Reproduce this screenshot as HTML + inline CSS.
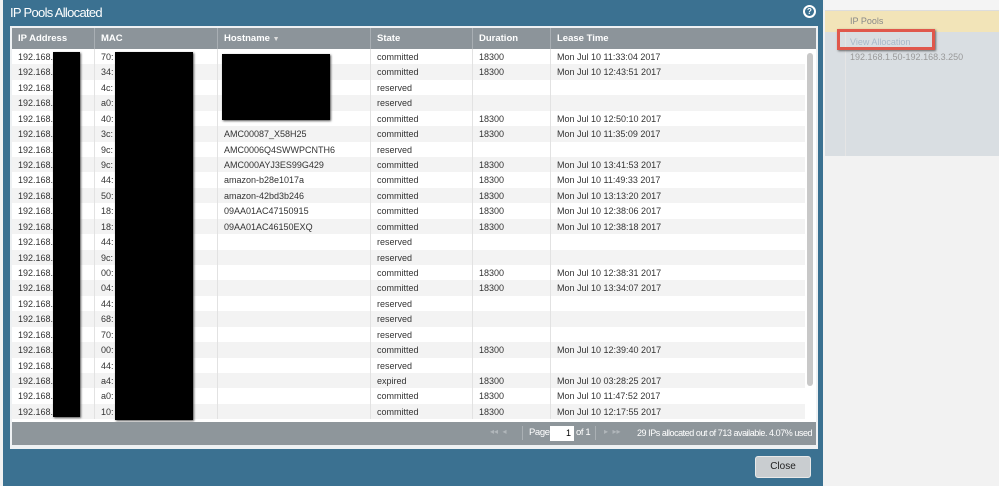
<!DOCTYPE html>
<html><head><meta charset="utf-8"><style>
body{margin:0;width:999px;height:486px;overflow:hidden;background:#f2f2f2;font-family:"Liberation Sans",sans-serif;position:relative}
.abs{position:absolute}
#modal{left:3px;top:0;width:820px;height:486px;background:#3b7191}
#title{left:10px;top:5px;color:#fff;font-size:13px;letter-spacing:-0.7px}
#help{left:803px;top:5px;width:9px;height:9px;border-radius:50%;background:#3b7191;border:2px solid #fff;color:#fff;font-size:8px;font-weight:bold;text-align:center;line-height:9px}
#panel{left:10px;top:26px;width:808px;height:423px;background:#eef1f3}
#grid{left:12px;top:28px;width:804px;height:394px;background:#fff;overflow:hidden}
#hdr{left:0;top:0;width:804px;height:21px;background:#8c949a;color:#fff;font-size:9.5px;font-weight:bold}
.h{position:absolute;top:0;height:21px;line-height:21px;padding-left:6px;box-sizing:border-box;border-left:1px solid #a9afb4}
.row{position:absolute;left:0;width:793px;height:15.43px;font-size:9px;color:#333;line-height:17px}
.row:nth-child(even){background:#f3f3f3}
.c{position:absolute;top:0;height:100%;padding-left:6px;box-sizing:border-box;border-left:1px solid #e2e2e2;white-space:nowrap;overflow:hidden}
.c1{left:0;width:82px;border-left:none}.c2{left:82px;width:123px}.c3{left:205px;width:153px}.c4{left:358px;width:102px}.c5{left:460px;width:78px}.c6{left:538px;width:255px}
#rows{left:0;top:21px;width:804px;height:373px}
#sb{left:793px;top:21px;width:11px;height:373px;background:#fff}
#sbt{left:795px;top:25px;width:6px;height:333px;background:#c8c8c8;border-radius:3px}
#foot{left:12px;top:422px;width:804px;height:23px;background:#8e969b;color:#fff;font-size:9.5px;white-space:nowrap}
.blk{background:#000;position:absolute;box-shadow:1px 1px 2px #555}
#close{left:755px;top:456px;width:56px;height:22px;background:#c9cdd0;border:1px solid #e8e8e8;border-radius:3px;box-sizing:border-box;text-align:center;line-height:20px;font-size:10px;color:#222}
</style></head><body>
<div class="abs" style="left:825px;top:0;width:174px;height:10px;background:#f4f4f4;border-bottom:1px solid #ddd"></div>
<div class="abs" style="left:825px;top:11px;width:174px;height:21px;background:#f2e4b8"></div>
<div class="abs" style="left:825px;top:32px;width:174px;height:124px;background:#d9dee2"></div>
<div class="abs" style="left:845px;top:32px;width:1px;height:124px;background:#e5e5e5"></div>
<div class="abs" style="left:850px;top:16px;font-size:9px;color:#888">IP Pools</div>
<div class="abs" style="left:850px;top:37px;font-size:9px;color:#a8b8c8">View Allocation</div>
<div class="abs" style="left:837px;top:29px;width:98px;height:21px;border:3px solid #e0584c;box-sizing:border-box;box-shadow:1px 1px 2px #666"></div>
<div class="abs" style="left:850px;top:52px;font-size:9px;color:#999">192.168.1.50-192.168.3.250</div>

<div id="modal" class="abs"></div>
<div id="title" class="abs">IP Pools Allocated</div>
<div id="help" class="abs">?</div>
<div id="panel" class="abs"></div>
<div id="grid" class="abs">
<div id="hdr" class="abs">
<div class="h" style="left:0;width:82px;border-left:none">IP Address</div>
<div class="h" style="left:82px;width:123px">MAC</div>
<div class="h" style="left:205px;width:153px">Hostname <span style="font-size:7px;color:#ddd">▼</span></div>
<div class="h" style="left:358px;width:102px">State</div>
<div class="h" style="left:460px;width:78px">Duration</div>
<div class="h" style="left:538px;width:266px">Lease Time</div>
</div>
<div id="rows" class="abs">
<div class="row" style="top:0px"><div class="c c1">192.168.</div><div class="c c2">70:</div><div class="c c3"></div><div class="c c4">committed</div><div class="c c5">18300</div><div class="c c6">Mon Jul 10 11:33:04 2017</div></div>
<div class="row" style="top:15.43px"><div class="c c1">192.168.</div><div class="c c2">34:</div><div class="c c3"></div><div class="c c4">committed</div><div class="c c5">18300</div><div class="c c6">Mon Jul 10 12:43:51 2017</div></div>
<div class="row" style="top:30.86px"><div class="c c1">192.168.</div><div class="c c2">4c:</div><div class="c c3"></div><div class="c c4">reserved</div><div class="c c5"></div><div class="c c6"></div></div>
<div class="row" style="top:46.29px"><div class="c c1">192.168.</div><div class="c c2">a0:</div><div class="c c3"></div><div class="c c4">reserved</div><div class="c c5"></div><div class="c c6"></div></div>
<div class="row" style="top:61.72px"><div class="c c1">192.168.</div><div class="c c2">40:</div><div class="c c3"></div><div class="c c4">committed</div><div class="c c5">18300</div><div class="c c6">Mon Jul 10 12:50:10 2017</div></div>
<div class="row" style="top:77.15px"><div class="c c1">192.168.</div><div class="c c2">3c:</div><div class="c c3">AMC00087_X58H25</div><div class="c c4">committed</div><div class="c c5">18300</div><div class="c c6">Mon Jul 10 11:35:09 2017</div></div>
<div class="row" style="top:92.58px"><div class="c c1">192.168.</div><div class="c c2">9c:</div><div class="c c3">AMC0006Q4SWWPCNTH6</div><div class="c c4">reserved</div><div class="c c5"></div><div class="c c6"></div></div>
<div class="row" style="top:108.01px"><div class="c c1">192.168.</div><div class="c c2">9c:</div><div class="c c3">AMC000AYJ3ES99G429</div><div class="c c4">committed</div><div class="c c5">18300</div><div class="c c6">Mon Jul 10 13:41:53 2017</div></div>
<div class="row" style="top:123.44px"><div class="c c1">192.168.</div><div class="c c2">44:</div><div class="c c3">amazon-b28e1017a</div><div class="c c4">committed</div><div class="c c5">18300</div><div class="c c6">Mon Jul 10 11:49:33 2017</div></div>
<div class="row" style="top:138.87px"><div class="c c1">192.168.</div><div class="c c2">50:</div><div class="c c3">amazon-42bd3b246</div><div class="c c4">committed</div><div class="c c5">18300</div><div class="c c6">Mon Jul 10 13:13:20 2017</div></div>
<div class="row" style="top:154.3px"><div class="c c1">192.168.</div><div class="c c2">18:</div><div class="c c3">09AA01AC47150915</div><div class="c c4">committed</div><div class="c c5">18300</div><div class="c c6">Mon Jul 10 12:38:06 2017</div></div>
<div class="row" style="top:169.73px"><div class="c c1">192.168.</div><div class="c c2">18:</div><div class="c c3">09AA01AC46150EXQ</div><div class="c c4">committed</div><div class="c c5">18300</div><div class="c c6">Mon Jul 10 12:38:18 2017</div></div>
<div class="row" style="top:185.16px"><div class="c c1">192.168.</div><div class="c c2">44:</div><div class="c c3"></div><div class="c c4">reserved</div><div class="c c5"></div><div class="c c6"></div></div>
<div class="row" style="top:200.59px"><div class="c c1">192.168.</div><div class="c c2">9c:</div><div class="c c3"></div><div class="c c4">reserved</div><div class="c c5"></div><div class="c c6"></div></div>
<div class="row" style="top:216.02px"><div class="c c1">192.168.</div><div class="c c2">00:</div><div class="c c3"></div><div class="c c4">committed</div><div class="c c5">18300</div><div class="c c6">Mon Jul 10 12:38:31 2017</div></div>
<div class="row" style="top:231.45px"><div class="c c1">192.168.</div><div class="c c2">04:</div><div class="c c3"></div><div class="c c4">committed</div><div class="c c5">18300</div><div class="c c6">Mon Jul 10 13:34:07 2017</div></div>
<div class="row" style="top:246.88px"><div class="c c1">192.168.</div><div class="c c2">44:</div><div class="c c3"></div><div class="c c4">reserved</div><div class="c c5"></div><div class="c c6"></div></div>
<div class="row" style="top:262.31px"><div class="c c1">192.168.</div><div class="c c2">68:</div><div class="c c3"></div><div class="c c4">reserved</div><div class="c c5"></div><div class="c c6"></div></div>
<div class="row" style="top:277.74px"><div class="c c1">192.168.</div><div class="c c2">70:</div><div class="c c3"></div><div class="c c4">reserved</div><div class="c c5"></div><div class="c c6"></div></div>
<div class="row" style="top:293.17px"><div class="c c1">192.168.</div><div class="c c2">00:</div><div class="c c3"></div><div class="c c4">committed</div><div class="c c5">18300</div><div class="c c6">Mon Jul 10 12:39:40 2017</div></div>
<div class="row" style="top:308.6px"><div class="c c1">192.168.</div><div class="c c2">44:</div><div class="c c3"></div><div class="c c4">reserved</div><div class="c c5"></div><div class="c c6"></div></div>
<div class="row" style="top:324.03px"><div class="c c1">192.168.</div><div class="c c2">a4:</div><div class="c c3"></div><div class="c c4">expired</div><div class="c c5">18300</div><div class="c c6">Mon Jul 10 03:28:25 2017</div></div>
<div class="row" style="top:339.46px"><div class="c c1">192.168.</div><div class="c c2">a0:</div><div class="c c3"></div><div class="c c4">committed</div><div class="c c5">18300</div><div class="c c6">Mon Jul 10 11:47:52 2017</div></div>
<div class="row" style="top:354.89px"><div class="c c1">192.168.</div><div class="c c2">10:</div><div class="c c3"></div><div class="c c4">committed</div><div class="c c5">18300</div><div class="c c6">Mon Jul 10 12:17:55 2017</div></div>
</div>
<div id="sb" class="abs"></div>
<div id="sbt" class="abs"></div>
</div>
<div class="blk" style="left:53px;top:52px;width:27px;height:365px"></div>
<div class="blk" style="left:115px;top:52px;width:78px;height:368px"></div>
<div class="blk" style="left:222px;top:54px;width:108px;height:66px"></div>
<div id="foot" class="abs">
<span class="abs" style="left:478px;top:5px;color:#b0b6ba;font-size:8px">◂◂ &nbsp;◂</span>
<span class="abs" style="left:510px;top:4px;width:1px;height:14px;background:#aab0b4"></span>
<span class="abs" style="left:517px;top:5px;letter-spacing:-0.4px">Page</span>
<span class="abs" style="left:538px;top:4px;width:24px;height:15px;background:#fff;color:#000;text-align:right;line-height:15px;font-size:9px;box-sizing:border-box;padding-right:3px">1</span>
<span class="abs" style="left:564px;top:5px;letter-spacing:-0.4px">of 1</span>
<span class="abs" style="left:583px;top:4px;width:1px;height:14px;background:#aab0b4"></span>
<span class="abs" style="left:592px;top:5px;color:#b0b6ba;font-size:8px">▸ &nbsp;▸▸</span>
<span class="abs" style="left:625px;top:6px;font-size:9px;letter-spacing:-0.45px">29 IPs allocated out of 713 available. 4.07% used</span>
</div>
<div id="close" class="abs">Close</div>
</body></html>
